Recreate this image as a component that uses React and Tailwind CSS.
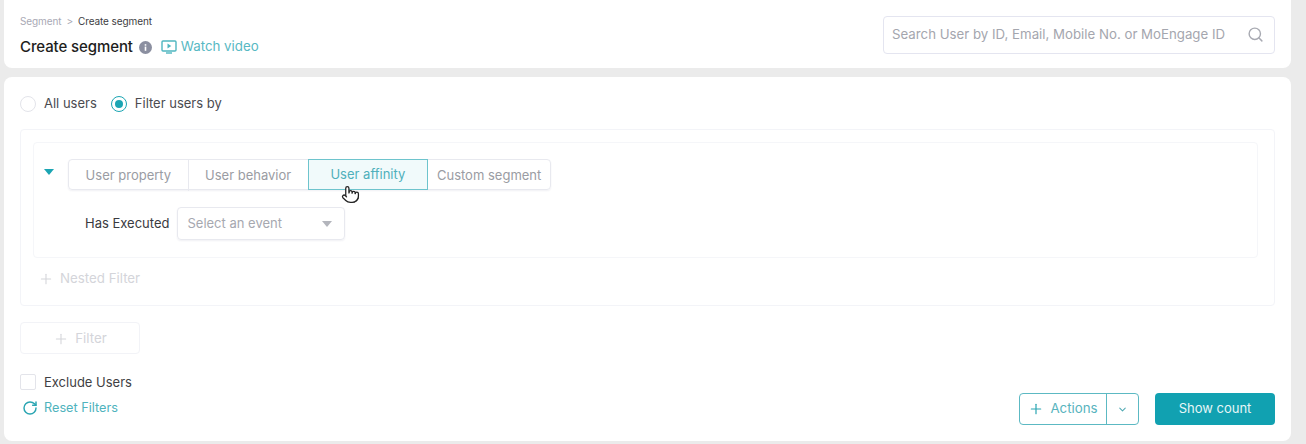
import React from "react";
import { Search, Plus, ChevronDown, RotateCw, Pointer } from "lucide-react";

function Tab({ children, active, className = "" }) {
  return (
    <div className={"h-[31px] flex items-center justify-center text-[13px] " + (active ? "bg-[#f1fafb] border-[1.5px] border-[#6ec4cd] text-[#4fb0bb] " : "text-[#9a9ca3] ") + className}>
      {children}
    </div>
  );
}

export default function App() {
  return (
    <div className="w-[1306px] h-[444px] overflow-hidden bg-[#ebebeb] pl-1 pr-[15px] font-['Inter','Liberation_Sans',sans-serif]">
      <header className="h-[68px] bg-white rounded-b-lg flex justify-between pl-4 pr-4">
        <div className="pt-[14px]">
          <div className="flex items-center gap-[5px] text-[10px] leading-[14px] tracking-[-0.1px]">
            <span className="text-[#a9a9b5]">Segment</span>
            <span className="text-[#a9a9b5]">&gt;</span>
            <span className="text-[#3d3d42]">Create segment</span>
          </div>
          <div className="flex items-center mt-[9px] h-[20px]">
            <span className="text-[15px] font-medium text-[#1d1d20] tracking-[-0.1px]">Create segment</span>
            <svg className="ml-[6px]" width="13" height="13" viewBox="0 0 13 13">
              <circle cx="6.5" cy="6.5" r="6.5" fill="#8b8fa0" />
              <rect x="5.7" y="5.6" width="1.6" height="4.2" fill="#fff" />
              <rect x="5.7" y="3.2" width="1.6" height="1.5" fill="#fff" />
            </svg>
            <svg className="ml-[9px]" width="16" height="14" viewBox="0 0 16 14" fill="none">
              <rect x="1" y="1" width="14" height="10" rx="1" stroke="#4fb6c0" strokeWidth="1.4" />
              <path d="M6.5 3.6v4.8l3.8-2.4z" fill="#4fb6c0" />
              <path d="M5 13h6" stroke="#4fb6c0" strokeWidth="1.4" />
            </svg>
            <span className="ml-[4px] text-[13.3px] text-[#58b9c3]">Watch video</span>
          </div>
        </div>
        <div className="mt-4 w-[392px] h-[38px] border border-[#e4e5f0] rounded-[4px] flex items-center justify-between pl-2 pr-[9px]">
          <span className="text-[13.25px] text-[#a4a6ae]">Search User by ID, Email, Mobile No. or MoEngage ID</span>
          <Search size={17} strokeWidth={2} className="text-[#a8aab2] mb-[2px] mr-[1px]" />
        </div>
      </header>

      <main className="mt-[9px] h-[364px] bg-white rounded-lg pl-4 pr-4 pt-[18px] relative">
        <div className="flex items-center h-[18px] text-[13px] text-[#4b4b50]">
          <span className="w-4 h-4 rounded-full border border-[#e3e4ea]" />
          <span className="ml-2">All users</span>
          <span className="ml-[14px] w-4 h-4 rounded-full border border-[#1ba5b3] flex items-center justify-center">
            <span className="w-2 h-2 rounded-full bg-[#1ba5b3]" />
          </span>
          <span className="ml-2">Filter users by</span>
        </div>

        <section className="mt-[16px] h-[177px] border border-[#f3f4f8] rounded-[4px] pl-3 pr-4 pt-3">
          <div className="h-[116px] border border-[#f5f6f9] rounded-[4px] pt-4 pl-[10px]">
            <div className="flex items-center">
              <svg width="10" height="6" viewBox="0 0 10 6" className="mb-[5px]"><path d="M0 0h10L5 6z" fill="#1ba5b3" /></svg>
              <div className="ml-[14px] flex relative w-[483px] border border-[#e8e9ef] rounded-[4px] h-[31px] shadow-[0_1px_2px_#f0f0f4]">
                <Tab className="w-[120px] border-r border-[#e8e9ef]">User property</Tab>
                <Tab className="w-[119px]">User behavior</Tab>
                <Tab active className="w-[121px] -my-px">User affinity</Tab>
                <Tab className="w-[122px]">Custom segment</Tab>
                <Pointer size={19} strokeWidth={1.6} fill="#fff" className="absolute left-[272px] top-[25px] text-[#222]" />
              </div>
            </div>
            <div className="flex items-center mt-[17px] ml-[41px]">
              <span className="text-[13px] text-[#3a3a40]">Has Executed</span>
              <div className="ml-2 w-[168px] h-[33px] border border-[#e8e9ef] rounded-[4px] flex items-center justify-between pl-[9px] pr-[12px] shadow-[0_1px_2px_#f0f0f4]">
                <span className="text-[13px] text-[#a6a8b0]">Select an event</span>
                <svg width="10" height="6" viewBox="0 0 10 6"><path d="M0 0h10L5 6z" fill="#b3b5bc" /></svg>
              </div>
            </div>
          </div>
          <div className="flex items-center mt-[11px] ml-[5px] text-[13.3px] text-[#d4d5da]">
            <Plus size={16} strokeWidth={1.6} />
            <span className="ml-[6px]">Nested Filter</span>
          </div>
        </section>

        <div className="mt-4 w-[120px] h-[32px] border border-[#f2f3f7] rounded-[4px] flex items-center justify-center gap-[6px] pt-[2px] text-[13.3px] text-[#d4d5da]">
          <Plus size={16} strokeWidth={1.6} />
          <span>Filter</span>
        </div>

        <div className="flex items-end justify-between">
          <div>
            <div className="flex items-center mt-5 h-4 text-[13px] text-[#3f3f44]">
              <span className="w-4 h-4 rounded-[2px] border border-[#e3e4ea]" />
              <span className="ml-2 pt-[2px]">Exclude Users</span>
            </div>
            <div className="flex items-center mt-[10px] ml-[2px] h-4 text-[12.7px] text-[#4fb3bd]">
              <RotateCw size={16} strokeWidth={2.2} className="text-[#2aa5b2]" />
              <span className="ml-[6px]">Reset Filters</span>
            </div>
          </div>
          <div className="flex gap-4 mb-[-9px]">
            <div className="w-[120px] h-[32px] border border-[#5cb9c3] rounded-[4px] flex items-center text-[13.3px] text-[#58b4be]">
              <div className="w-[87px] h-full border-r border-[#5cb9c3] flex items-center justify-center gap-[6px]">
                <Plus size={16} strokeWidth={1.8} className="text-[#2aa5b2]" />
                <span>Actions</span>
              </div>
              <div className="flex-1 flex items-center justify-center">
                <ChevronDown size={11} strokeWidth={2.2} className="text-[#4fa9b3]" />
              </div>
            </div>
            <div className="w-[120px] h-[32px] rounded-[4px] bg-[#11a1b1] flex items-center justify-center text-[13px] text-[#e6f6f7]">Show count</div>
          </div>
        </div>
      </main>
    </div>
  );
}
